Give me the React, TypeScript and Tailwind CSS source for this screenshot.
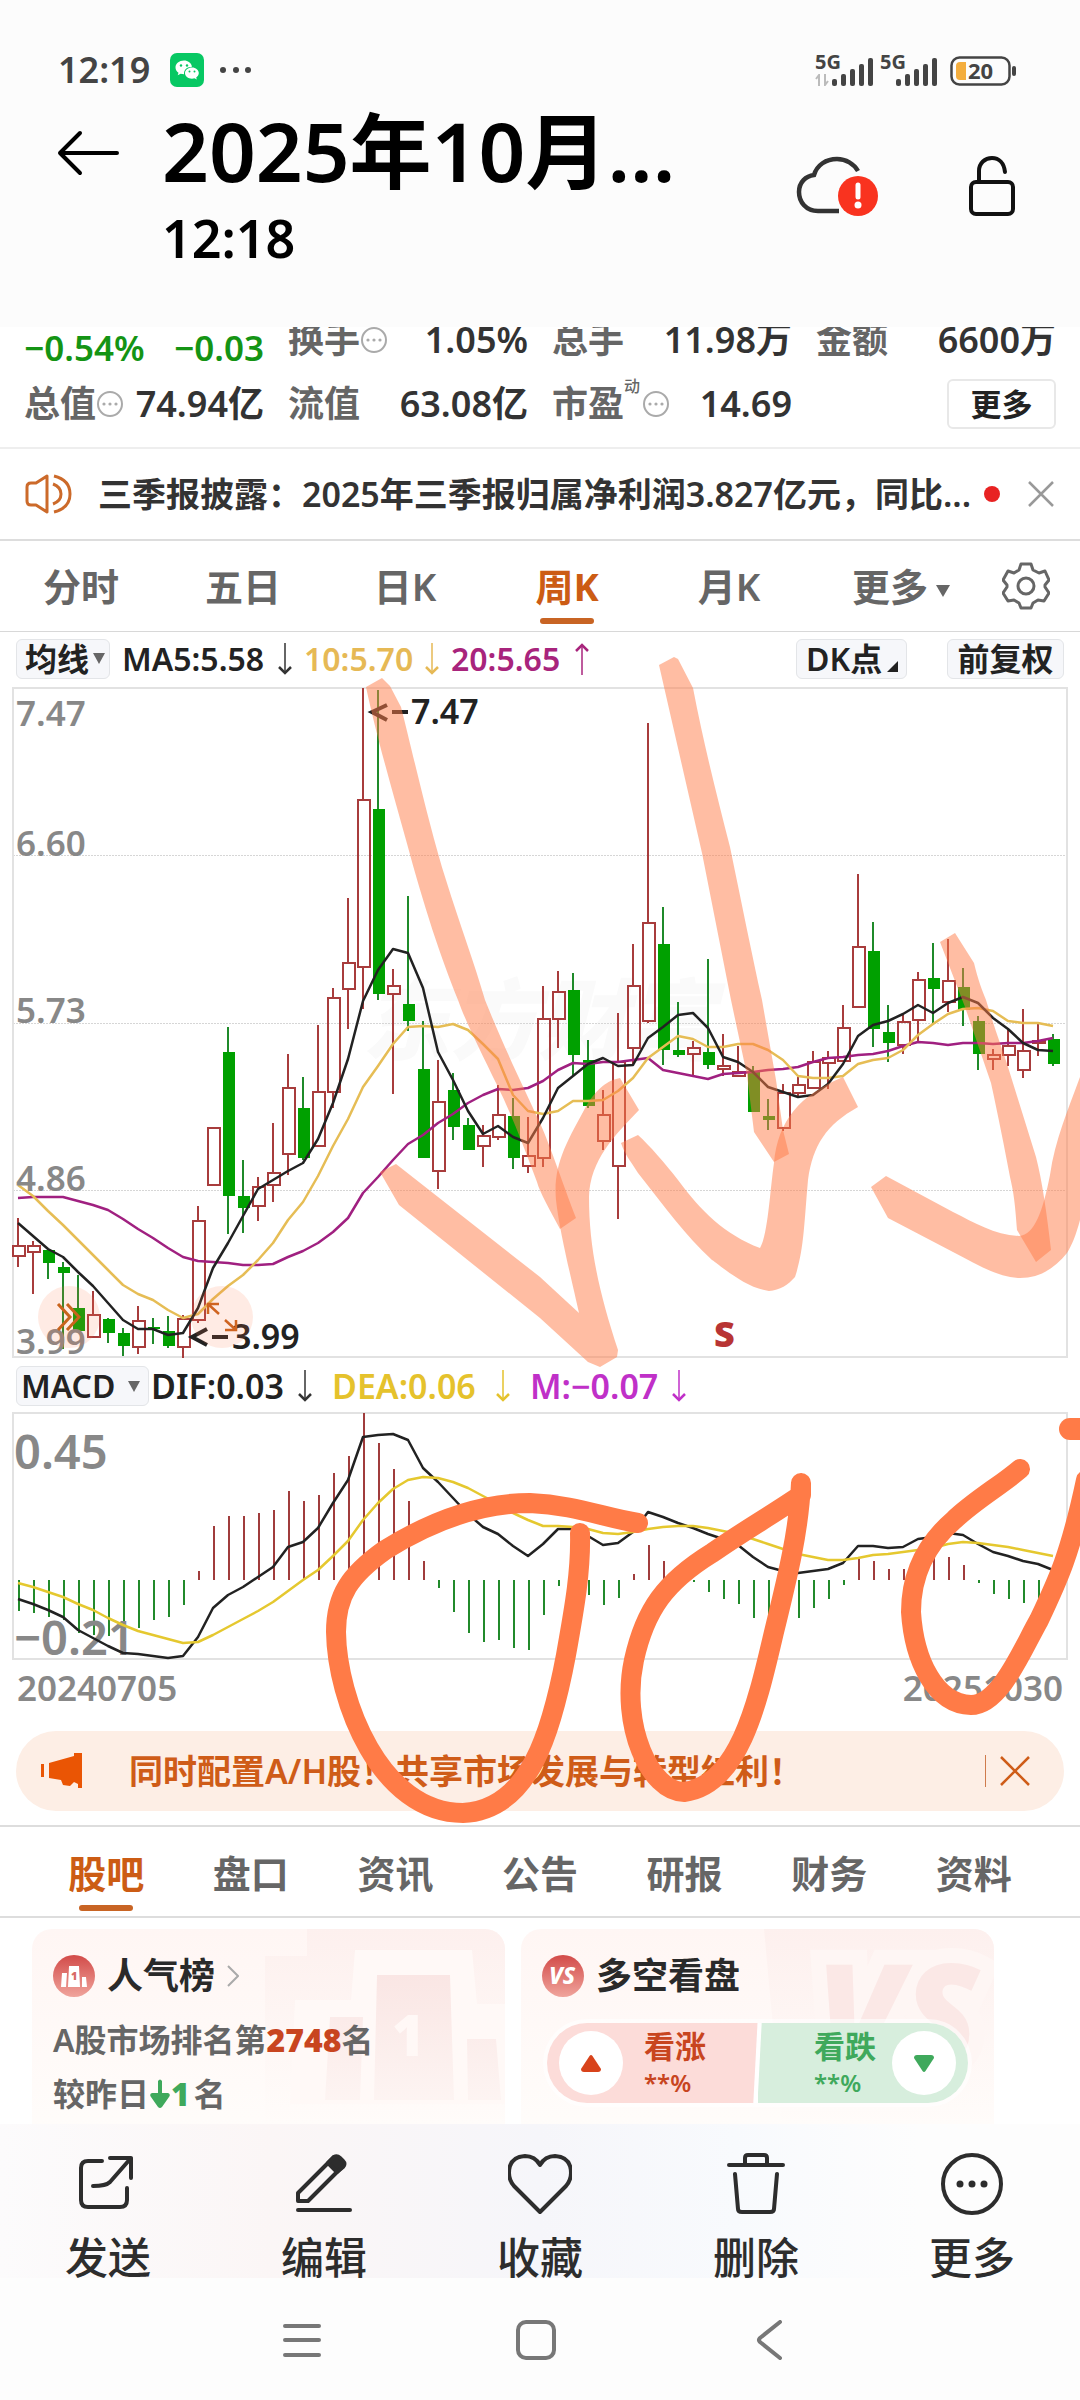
import React from "react";

const UP = "#a83c3c";
const DOWN = "#00a000";

/* [direction, high, body top, body bottom, low] in chart units */
const candles: [0 | 1, number, number, number, number][] = [
  [1, 1217, 1245, 1255, 1266], [1, 1240, 1245, 1251, 1293], [0, 1249, 1249, 1262, 1278], [0, 1261, 1266, 1272, 1348],
  [0, 1274, 1307, 1330, 1330], [1, 1290, 1314, 1336, 1337], [0, 1317, 1318, 1332, 1342], [0, 1327, 1332, 1345, 1355],
  [1, 1305, 1320, 1346, 1353], [0, 1317, 1326, 1328, 1343], [0, 1315, 1330, 1345, 1347], [1, 1314, 1318, 1346, 1357],
  [1, 1205, 1220, 1319, 1322], [1, 1127, 1127, 1184, 1184], [0, 1026, 1051, 1195, 1233], [0, 1159, 1195, 1207, 1232],
  [1, 1176, 1186, 1205, 1220], [1, 1122, 1172, 1184, 1201], [1, 1053, 1087, 1153, 1174], [0, 1076, 1107, 1157, 1159],
  [1, 1024, 1091, 1145, 1145], [1, 987, 997, 1091, 1107], [1, 897, 962, 988, 1028], [1, 687, 799, 966, 1008],
  [0, 689, 808, 993, 999], [1, 968, 985, 993, 1093], [0, 895, 1003, 1020, 1030], [0, 1020, 1068, 1157, 1157],
  [1, 1059, 1101, 1170, 1188], [0, 1072, 1089, 1126, 1139], [0, 1117, 1124, 1149, 1149], [1, 1124, 1135, 1145, 1166],
  [1, 1084, 1114, 1136, 1139], [0, 1097, 1115, 1157, 1168], [1, 1116, 1155, 1165, 1172], [1, 985, 1018, 1157, 1166],
  [1, 970, 991, 1018, 1047], [0, 972, 989, 1054, 1075], [0, 1039, 1059, 1105, 1107], [1, 1089, 1114, 1140, 1149],
  [1, 1012, 1061, 1165, 1218], [1, 943, 985, 1047, 1064], [1, 722, 922, 1020, 1022], [0, 906, 943, 1049, 1064],
  [0, 1001, 1049, 1054, 1056], [1, 1040, 1047, 1053, 1074], [0, 958, 1051, 1064, 1068], [1, 1033, 1065, 1068, 1075],
  [1, 1045, 1071, 1075, 1076], [0, 1065, 1071, 1111, 1111], [0, 1098, 1115, 1119, 1129], [1, 1083, 1092, 1127, 1130],
  [1, 1076, 1084, 1092, 1097], [1, 1050, 1061, 1087, 1088], [1, 1050, 1057, 1062, 1088], [1, 1004, 1027, 1060, 1061],
  [1, 873, 946, 1006, 1006], [0, 921, 950, 1028, 1046], [0, 1004, 1031, 1042, 1061], [1, 1013, 1021, 1044, 1053],
  [1, 971, 979, 1019, 1040], [0, 942, 977, 988, 1024], [1, 938, 980, 1001, 1011], [0, 967, 986, 1009, 1025],
  [0, 1015, 1020, 1053, 1069], [1, 1048, 1054, 1058, 1069], [1, 1029, 1045, 1054, 1065], [1, 1008, 1050, 1069, 1077],
  [1, 1023, 1040, 1042, 1055], [0, 1033, 1038, 1063, 1065],
];

const ma5 = [1222, 1235, 1248, 1256, 1271, 1285, 1302, 1319, 1328, 1328, 1334, 1332, 1307, 1267, 1242, 1215, 1188, 1179, 1170, 1162, 1138, 1102, 1058, 1000, 969, 948, 952, 987, 1051, 1079, 1110, 1133, 1125, 1136, 1142, 1117, 1087, 1075, 1063, 1057, 1065, 1064, 1037, 1026, 1014, 1012, 1027, 1056, 1061, 1071, 1086, 1091, 1096, 1094, 1083, 1063, 1035, 1024, 1020, 1013, 1004, 1012, 1002, 996, 1002, 1017, 1028, 1042, 1049, 1050];
const ma10 = [1184, 1195, 1210, 1224, 1239, 1254, 1269, 1284, 1293, 1299, 1309, 1317, 1313, 1298, 1285, 1274, 1259, 1242, 1219, 1201, 1175, 1145, 1118, 1086, 1065, 1043, 1026, 1025, 1026, 1023, 1029, 1043, 1058, 1094, 1110, 1113, 1110, 1100, 1100, 1099, 1090, 1077, 1057, 1046, 1035, 1038, 1046, 1046, 1043, 1043, 1049, 1059, 1075, 1077, 1077, 1075, 1063, 1059, 1057, 1049, 1034, 1023, 1013, 1008, 1007, 1010, 1020, 1022, 1022, 1025];
const ma20 = [1197, 1196, 1196, 1196, 1200, 1204, 1209, 1218, 1228, 1237, 1247, 1256, 1260, 1261, 1262, 1264, 1264, 1263, 1256, 1250, 1242, 1231, 1217, 1192, 1176, 1159, 1143, 1134, 1122, 1113, 1102, 1094, 1088, 1089, 1087, 1080, 1069, 1062, 1063, 1061, 1061, 1059, 1057, 1069, 1072, 1075, 1078, 1073, 1072, 1071, 1069, 1068, 1066, 1061, 1057, 1056, 1054, 1053, 1050, 1045, 1041, 1042, 1044, 1042, 1042, 1043, 1042, 1042, 1040, 1037];

const bars = [1610, 1612, 1616, 1619, 1632, 1634, 1635, 1632, 1627, 1619, 1616, 1604, 1570, 1525, 1515, 1515, 1512, 1509, 1490, 1500, 1494, 1472, 1455, 1412, 1442, 1468, 1500, 1560, 1587, 1611, 1632, 1641, 1639, 1647, 1649, 1614, 1585, 1585, 1594, 1604, 1597, 1573, 1544, 1560, 1572, 1581, 1591, 1598, 1603, 1617, 1625, 1622, 1617, 1607, 1598, 1584, 1556, 1560, 1568, 1568, 1562, 1556, 1556, 1564, 1582, 1593, 1598, 1602, 1602, 1602];
const dif = [1598, 1603, 1609, 1616, 1629, 1637, 1645, 1652, 1653, 1655, 1657, 1655, 1636, 1607, 1594, 1586, 1576, 1566, 1546, 1541, 1527, 1502, 1479, 1436, 1434, 1433, 1439, 1467, 1481, 1497, 1513, 1526, 1533, 1545, 1555, 1543, 1528, 1528, 1535, 1544, 1542, 1531, 1511, 1516, 1522, 1527, 1533, 1538, 1544, 1556, 1566, 1570, 1572, 1570, 1568, 1562, 1545, 1545, 1547, 1546, 1538, 1536, 1532, 1534, 1543, 1551, 1555, 1560, 1563, 1569];
const dea = [1582, 1586, 1591, 1596, 1603, 1609, 1617, 1624, 1630, 1634, 1638, 1642, 1641, 1634, 1626, 1618, 1610, 1601, 1590, 1579, 1569, 1555, 1540, 1519, 1502, 1488, 1479, 1476, 1477, 1481, 1487, 1495, 1503, 1512, 1519, 1525, 1525, 1526, 1528, 1532, 1533, 1531, 1528, 1526, 1525, 1525, 1527, 1530, 1533, 1538, 1543, 1548, 1553, 1556, 1559, 1559, 1557, 1554, 1553, 1551, 1549, 1547, 1543, 1541, 1542, 1544, 1546, 1549, 1552, 1555];

const line = (ys: number[]) => ys.map((y, i) => `${18 + i * 15},${y}`).join(" ");

function PriceChart() {
  return (
    <svg viewBox="0 680 1080 682" className="block h-auto w-full" fontWeight={600}>
      <text x="362" y="1052" fontSize="88" fontStyle="italic" fontWeight={900} fill="#fafafa">东方财富</text>
      <g stroke="#d6d6d6" strokeWidth="1" strokeDasharray="2 1">
        <path d="M13 854.5H1067M13 1022.5H1067M13 1189.5H1067" />
      </g>
      <rect x="13" y="687" width="1054" height="669" fill="none" stroke="#e2e2e2" strokeWidth="2" />
      {candles.map(([up, h, t, b, l], i) => {
        const x = 18 + i * 15;
        return up ? (
          <g key={i} stroke={UP} strokeWidth="2" fill="none">
            <path d={`M${x} ${h}V${t}M${x} ${b}V${l}`} />
            <rect x={x - 5} y={t} width="12" height={Math.max(b - t, 1)} />
          </g>
        ) : (
          <g key={i}>
            <path d={`M${x} ${h}V${l}`} stroke="#1f8a2a" strokeWidth="2" />
            <rect x={x - 5} y={t} width="12" height={b - t} fill={DOWN} />
          </g>
        );
      })}
      <g fill="none" strokeWidth="2.500" strokeLinejoin="round">
        <polyline points={line(ma20)} stroke="#a02080" />
        <polyline points={line(ma10)} stroke="#e6bd55" />
        <polyline points={line(ma5)} stroke="#222" />
      </g>
      <g fill="#888" fontSize="35">
        <text x="16" y="725">7.47</text>
        <text x="16" y="855">6.60</text>
        <text x="16" y="1022">5.73</text>
        <text x="16" y="1190">4.86</text>
        <text x="16" y="1353">3.99</text>
      </g>
      <g fill="none" stroke="#222" strokeWidth="4">
        <path d="M387 704L372 711L387 719M392 711H408M207 1328L192 1336L207 1344M212 1336H228" />
      </g>
      <g fill="#222" fontSize="34">
        <text x="411" y="723">7.47</text>
        <text x="232" y="1348">3.99</text>
      </g>
      <text x="714" y="1346" fontSize="36" fontWeight={900} fill="#b83434">S</text>
    </svg>
  );
}

function MacdChart() {
  return (
    <svg viewBox="0 1408 1080 254" className="block h-auto w-full" fontWeight={600}>
      <rect x="13" y="1412" width="1054" height="246" fill="none" stroke="#e2e2e2" strokeWidth="2" />
      {bars.map((y, i) => (
        <path key={i} d={`M${19 + i * 15} 1579V${y}`} strokeWidth="2" stroke={y < 1579 ? "#a03c3c" : "#218a2b"} />
      ))}
      <g fill="#888" fontSize="47">
        <text x="14" y="1468">0.45</text>
        <text x="14" y="1654">−0.21</text>
      </g>
      <g fill="none" strokeWidth="2.500" strokeLinejoin="round">
        <polyline points={line(dif)} stroke="#222" />
        <polyline points={line(dea)} stroke="#e5c82f" />
      </g>
    </svg>
  );
}

function Ink() {
  return (
    <svg viewBox="0 632 1080 1200" className="pointer-events-none absolute left-0 top-0 z-10 block h-auto w-full" aria-hidden="true">
      <g fill="#ff7b47" fillOpacity="0.5">
        <path d="M366 687L382 678L390 686L401 707C412 750 430 830 446 880C460 925 475 965 485 1000C505 1050 525 1090 540 1123C550 1145 565 1190 576 1218L560 1229C550 1210 540 1193 537 1182C525 1150 512 1115 497 1085C480 1050 465 1020 458 1000C440 955 425 910 406 840C392 790 375 730 366 687Z" />
        <path d="M380 1172L396 1164L540 1277L579 1313C573 1285 560 1235 556 1200C553 1165 566 1143 588 1103C600 1085 610 1080 620 1078L639 1110C615 1135 590 1160 589 1197C589 1250 600 1295 618 1350L617 1357L600 1367L588 1362L540 1318L399 1205Z" />
        <path d="M659 665L674 657L678 659L693 688C705 750 718 800 730 847C742 905 752 955 762 1000L776 1080L783 1130L789 1154L774 1162L754 1132L747 1075L731 1000L702 853Z" />
        <path d="M621 1143L638 1135C650 1146 664 1162 678 1180C700 1210 725 1235 760 1248C768 1235 770 1190 774 1163C778 1120 800 1095 843 1077L858 1107C826 1125 813 1145 808 1180C804 1225 804 1250 795 1277C788 1285 780 1290 769 1291C745 1288 720 1265 712 1260C685 1235 665 1207 638 1173C630 1160 625 1155 621 1143Z" />
        <path d="M940 942L955 933L974 963C978 980 982 990 986 1000C995 1030 1002 1048 1008 1067L1036 1157C1042 1180 1047 1215 1051 1250L1036 1262L1017 1230C1015 1200 1013 1190 1010 1177C1005 1150 998 1115 991 1083L965 1007Z" />
        <path d="M871 1187L886 1176L953 1212C975 1223 995 1235 1019 1236C1035 1235 1043 1210 1050 1175C1055 1140 1068 1110 1080 1077V1220C1076 1235 1072 1245 1067 1253C1055 1268 1040 1278 1020 1278C995 1277 975 1263 953 1252L888 1218Z" />
      </g>
      <g fill="none" stroke="#ff7b47" strokeWidth="20" strokeLinecap="round" strokeLinejoin="round">
        <path d="M638 1523C605 1518 575 1505 530 1503C475 1503 425 1525 385 1550C350 1575 336 1595 336 1632C337 1700 380 1813 463 1813C530 1810 552 1730 566 1655C575 1605 581 1570 580 1533" />
        <path d="M801 1483V1495C775 1513 745 1530 712 1553C665 1582 645 1610 634 1660C620 1725 650 1792 684 1792C740 1785 758 1700 774 1632C788 1575 799 1530 801 1483" />
        <path d="M1020 1469C1000 1486 975 1500 954 1520C925 1545 911 1575 911 1612C914 1660 935 1704 971 1705C1000 1705 1022 1650 1039 1620C1058 1580 1070 1555 1086 1480" />
        <path d="M1070 1429H1096" strokeWidth="22" />
      </g>
    </svg>
  );
}

function MoreDots() {
  return (
    <svg viewBox="0 0 28 28" className="h-7 w-7 shrink-0" fill="none" stroke="#aaa" strokeWidth="2">
      <circle cx="14" cy="14" r="12" />
      <g fill="#aaa" stroke="none"><circle cx="8" cy="14" r="1.6" /><circle cx="14" cy="14" r="1.6" /><circle cx="20" cy="14" r="1.6" /></g>
    </svg>
  );
}

function Signal() {
  return (
    <svg viewBox="0 0 42 28" className="h-7 w-[42px]" fill="#444">
      <rect x="0" y="21" width="5" height="7" rx="2" /><rect x="9" y="16" width="5" height="12" rx="2" /><rect x="18" y="11" width="5" height="17" rx="2" /><rect x="27" y="6" width="5" height="22" rx="2" /><rect x="36" y="0" width="5" height="28" rx="2" />
    </svg>
  );
}

function Arrow({ color, up = false }: { color: string; up?: boolean }) {
  return (
    <svg viewBox="0 0 14 34" className="h-[34px] w-[14px] shrink-0" fill="none" stroke={color}>
      {up ? <><path d="M7 3V33" strokeWidth="1.5" /><path d="M1 9L7 3L13 9" strokeWidth="2.5" /></> : <><path d="M7 1V30" strokeWidth="1.5" /><path d="M1 25L7 31L13 25" strokeWidth="2.5" /></>}
    </svg>
  );
}

const chip = "flex h-10 shrink-0 items-center rounded-md border border-[#e3e5e8] bg-[#f6f7fa] text-[32px] font-semibold leading-[38px] text-[#222]";

function Header() {
  return (
    <header className="bg-[#fcfcfc] pb-[59px] pt-12 text-black">
      <div className="flex h-11 items-center pl-[58px] pr-[64px] text-[#444]">
        <span className="text-[36px] font-semibold leading-[44px]">12:19</span>
        <svg viewBox="0 0 34 34" className="ml-5 h-[34px] w-[34px]">
          <rect width="34" height="34" rx="7" fill="#07c863" />
          <path d="M14 7.500c-4.800 0-8.500 3-8.500 6.900 0 2.200 1.200 4 3 5.300l-.8 2.500 2.900-1.500c1.100.3 2.200.5 3.400.5v-1c0-3.700 3.500-6.500 8-6.500C21.200 9.800 18 7.500 14 7.500z" fill="#fff" />
          <path d="M22 14.500c-4 0-7 2.500-7 5.600s3 5.600 7 5.600c.9 0 1.700-.1 2.500-.4l2.300 1.200-.6-2c1.600-1 2.600-2.600 2.600-4.400 0-3.100-3-5.600-6.800-5.600z" fill="#fff" />
          <g fill="#07c863"><circle cx="11" cy="12.500" r="1.200" /><circle cx="17" cy="12.500" r="1.200" /><circle cx="19.500" cy="18.500" r="1" /><circle cx="24.500" cy="18.500" r="1" /></g>
        </svg>
        <svg viewBox="0 0 32 8" className="ml-4 h-2 w-8" fill="#444"><circle cx="3" cy="4" r="3" /><circle cx="16" cy="4" r="3" /><circle cx="28" cy="4" r="3" /></svg>
        <div className="ml-auto flex h-8 items-end">
          <div className="relative pl-[17px]">
            <span className="absolute left-0 top-[-6px] text-[20px] font-bold leading-5">5G</span>
            <svg viewBox="0 0 14 12" className="absolute bottom-0 left-0 h-3 w-[14px]" fill="none" stroke="#bbb" strokeWidth="2"><path d="M4 12V1L1 5M10 0V11L13 7" /></svg>
            <Signal />
          </div>
          <div className="relative ml-[6px] pl-[16px]">
            <span className="absolute left-0 top-[-6px] text-[20px] font-bold leading-5">5G</span>
            <Signal />
          </div>
          <svg viewBox="0 0 66 30" className="ml-3 h-[30px] w-[66px]">
            <rect x="1.500" y="1.500" width="58" height="27" rx="8" fill="none" stroke="#444" strokeWidth="2.500" />
            <path d="M6 10a4 4 0 0 1 4-4h6v18h-6a4 4 0 0 1-4-4z" fill="#f4ad3c" />
            <rect x="62" y="10" width="4" height="10" rx="2" fill="#444" />
            <text x="18" y="23" fontSize="22" fontWeight={700} fill="#444">20</text>
          </svg>
        </div>
      </div>
      <div className="flex items-start pl-[56px] pr-[62px] pt-[14px]">
        <button aria-label="返回" className="mt-6">
          <svg viewBox="0 0 64 46" className="h-[46px] w-[64px]" fill="none" stroke="#000" strokeWidth="4" strokeLinecap="round" strokeLinejoin="round"><path d="M61 23H4M24 3L4 23L24 43" /></svg>
        </button>
        <div className="ml-[42px] min-w-0 flex-1">
          <h1 className="whitespace-nowrap text-[82px] font-semibold leading-[88px]">2025年10月...</h1>
          <p className="mt-[14px] text-[52px] font-semibold leading-[60px]">12:18</p>
        </div>
        <button aria-label="云同步" className="mt-12">
          <svg viewBox="0 0 84 64" className="h-16 w-[84px]">
            <path d="M43 57H22C10 57 3 48 3 38C3 28 10 22 18 21C21 11 30 5 41 5C50 5 58 10 62 17" fill="none" stroke="#333" strokeWidth="4.500" />
            <circle cx="62" cy="42" r="20" fill="#f9331f" />
            <path d="M62 31V43" stroke="#fff" strokeWidth="5" strokeLinecap="round" /><circle cx="62" cy="51" r="3.500" fill="#fff" />
          </svg>
        </button>
        <button aria-label="锁定" className="ml-[86px] mt-12">
          <svg viewBox="0 0 52 64" className="h-16 w-[52px]" fill="none" stroke="#111" strokeWidth="4" strokeLinecap="round"><rect x="5" y="28" width="42" height="32" rx="5" /><path d="M13 28V17C13 9 19 4 26 4C33 4 38 9 39 18" /></svg>
        </button>
      </div>
    </header>
  );
}

function Cell({ label, value, dots = false, sup }: { label: string; value: string; dots?: boolean; sup?: string }) {
  return (
    <div className="flex items-center whitespace-nowrap">
      <span className="font-semibold text-[#666]">{label}</span>
      {sup && <sup className="mb-5 w-[18px] text-[16px] font-medium leading-4 text-[#666]">{sup}</sup>}
      {dots && <MoreDots />}
      <span className="ml-auto text-[36px] font-semibold text-[#333]">{value}</span>
    </div>
  );
}

function Quote() {
  return (
    <section className="overflow-hidden border-b-2 border-[#eee] pb-[6px]">
      <div className="-mt-[14px] grid grid-cols-4 gap-x-6 px-6 text-[36px] leading-[54px]">
        <div className="flex items-end justify-between whitespace-nowrap pt-4 text-[35px] font-semibold leading-[38px] text-[#149414]"><span>−0.54%</span><span>−0.03</span></div>
        <Cell label="换手" value="1.05%" dots />
        <Cell label="总手" value="11.98万" />
        <Cell label="金额" value="6600万" />
        <div className="col-span-4 grid h-[74px] grid-cols-4 gap-x-6">
          <Cell label="总值" value="74.94亿" dots />
          <Cell label="流值" value="63.08亿" />
          <Cell label="市盈" value="14.69" dots sup="动" />
          <div className="flex items-center justify-end"><button className="h-[50px] w-[109px] rounded-md border-2 border-[#e8e8e8] text-[31px] font-semibold leading-[44px] text-[#222]">更多</button></div>
        </div>
      </div>
    </section>
  );
}

function News() {
  return (
    <section className="flex h-[92px] items-center border-b-2 border-[#ddd] pl-[25px] pr-[26px]">
      <svg viewBox="0 0 48 42" className="h-[42px] w-12 shrink-0" fill="none" stroke="#cc6a2a" strokeWidth="3" strokeLinejoin="round"><path d="M22 3L11 10H6Q2 10 2 14V28Q2 32 6 32H11L22 39ZM28 11Q36 14 36 21T28 31M29 3Q45 7 45 21T29 39" /></svg>
      <p className="ml-[25px] min-w-0 flex-1 whitespace-nowrap text-[34px] font-semibold leading-[50px] text-[#333]">三季报披露：2025年三季报归属净利润3.827亿元，同比...</p>
      <span className="h-4 w-4 rounded-full bg-[#e82222]" />
      <button aria-label="关闭" className="ml-7"><svg viewBox="0 0 26 26" className="h-[26px] w-[26px]" stroke="#999" strokeWidth="2.500"><path d="M1 1L25 25M25 1L1 25" /></svg></button>
    </section>
  );
}

function PeriodTabs() {
  return (
    <nav className="flex h-[91px] border-b border-[#d8d8d8] text-[38px] font-semibold leading-[88px] text-[#666]">
      {["分时", "五日", "日K", "周K", "月K", "更多"].map((t) => (
        <button key={t} className={`relative w-[15%] whitespace-nowrap ${t === "周K" ? "font-bold text-[#cc5c14]" : ""} ${t === "更多" ? "pl-5" : ""}`}>
          {t}
          {t === "更多" && <svg viewBox="0 0 14 12" className="ml-2 inline-block h-3 w-[14px]" fill="#666"><path d="M0 0H14L7 12Z" /></svg>}
          {t === "周K" && <span className="absolute bottom-[7px] left-1/2 h-[6px] w-[54px] -translate-x-1/2 rounded-full bg-[#c86424]" />}
        </button>
      ))}
      <button aria-label="设置" className="flex w-[10%] items-center justify-center">
        <svg viewBox="0 0 48 48" className="h-12 w-12" fill="none" stroke="#666" strokeWidth="3" strokeLinejoin="round"><path d="M19 2H29L31 8L37 11L43 9L47 18L43 23V25L47 31L42 39L36 38L31 41L29 46H19L17 41L12 38L6 39L1 31L5 25V23L1 18L6 9L12 11L17 8Z" /><circle cx="24" cy="24" r="8" /></svg>
      </button>
    </nav>
  );
}

function Charts() {
  return (
    <section className="relative">
      <Ink />
      <div className="flex h-[49px] items-center whitespace-nowrap px-4 pt-1 text-[32px] font-semibold leading-[40px]">
        <button className={`${chip} w-[94px] pl-2`}>均线<svg viewBox="0 0 12 11" className="ml-1 h-[11px] w-3" fill="#666"><path d="M0 0H12L6 11Z" /></svg></button>
        <div className="ml-3 flex flex-1 items-center">
          <span className="w-[156px] text-[#222]">MA5:5.58</span><Arrow color="#333" />
          <span className="ml-3 w-[121px] text-[#e6b955]">10:5.70</span><Arrow color="#e6b955" />
          <span className="ml-3 w-[124px] text-[#a8247c]">20:5.65</span><Arrow color="#a8247c" up />
        </div>
        <button className={`${chip} w-[111px] pl-[9px]`}>DK点<svg viewBox="0 0 11 11" className="ml-[5px] mt-4 h-[11px] w-[11px]" fill="#222"><path d="M11 0V11H0Z" /></svg></button>
        <button className={`${chip} ml-10 w-[117px] justify-center`}>前复权</button>
      </div>
      <div className="relative">
        <PriceChart />
        <button aria-label="展开" className="absolute bottom-[15px] left-[38px] flex h-[62px] w-[62px] items-center justify-center rounded-full bg-[#ff7b47]/15">
          <svg viewBox="0 0 26 28" className="h-7 w-[26px]" fill="none" stroke="#c9641c" strokeWidth="3"><path d="M2 1L14 14L2 27M11 1L23 14L11 27" /></svg>
        </button>
        <button aria-label="全屏" className="absolute bottom-[15px] left-[191px] flex h-[62px] w-[62px] items-center justify-center rounded-full bg-[#ff7b47]/15">
          <svg viewBox="0 0 32 32" className="h-8 w-8" fill="none" stroke="#cf6420" strokeWidth="2.500"><path d="M2 13V3H13M2 3L13 13M30 19V29H19M30 29L19 19" /></svg>
        </button>
      </div>
      <div className="flex h-[46px] items-center whitespace-nowrap pl-4 text-[34px] font-semibold leading-[40px]">
        <button className={`${chip} w-[133px] pl-1`}>MACD<svg viewBox="0 0 12 11" className="ml-auto mr-2 h-[11px] w-3" fill="#666"><path d="M0 0H12L6 11Z" /></svg></button>
        <span className="ml-[2px] w-[147px] text-[#222]">DIF:0.03</span><Arrow color="#333" />
        <span className="ml-5 w-[164px] text-[#e5c22c]">DEA:0.06</span><Arrow color="#e5c22c" />
        <span className="ml-5 w-[142px] text-[#c030c8]">M:−0.07</span><Arrow color="#c030c8" />
      </div>
      <MacdChart />
      <div className="flex h-[68px] justify-between px-[17px] pt-[2px] text-[35px] font-semibold leading-[46px] text-[#888]"><span>20240705</span><span>20251030</span></div>
      <div className="border-b-2 border-[#ddd] px-4 pb-[14px]">
        <div className="flex h-20 items-center rounded-full bg-[#fdeee5] pl-[25px] pr-[34px]">
          <svg viewBox="0 0 42 36" className="h-9 w-[42px] shrink-0" fill="#ea5504"><rect x="0" y="11" width="3" height="13" /><path d="M8 10L33 3V0H41V35H37V31L33 29L29 33L22 32L20 27L8 25Z" /></svg>
          <p className="ml-[46px] flex-1 whitespace-nowrap text-[34px] font-semibold leading-[50px] text-[#cf5c18]">同时配置A/H股！共享市场发展与转型红利！</p>
          <span className="h-8 w-px bg-[#cf7b4c]" />
          <button aria-label="关闭横幅" className="ml-[14px]"><svg viewBox="0 0 30 30" className="h-[30px] w-[30px]" stroke="#cf5c18" strokeWidth="2.500"><path d="M1 1L29 29M29 1L1 29" /></svg></button>
        </div>
      </div>
    </section>
  );
}

function InfoTabs() {
  return (
    <nav className="flex h-[91px] border-b-2 border-[#ddd] px-[34px] text-[38px] font-semibold leading-[92px] text-[#666]">
      {["股吧", "盘口", "资讯", "公告", "研报", "财务", "资料"].map((t) => (
        <button key={t} className={`relative flex-1 ${t === "股吧" ? "font-bold text-[#cc5c14]" : ""}`}>
          {t}
          {t === "股吧" && <span className="absolute bottom-[5px] left-1/2 h-[6px] w-[54px] -translate-x-1/2 rounded-full bg-[#c86424]" />}
        </button>
      ))}
    </nav>
  );
}

function Cards() {
  return (
    <section className="flex h-[206px] gap-4 overflow-hidden pl-8 pr-[86px] pt-[11px]">
      <div className="relative h-[220px] flex-1 overflow-hidden rounded-[20px] bg-gradient-to-b from-[#fff6f4] to-[#fffdfb] pl-[21px]">
        <svg viewBox="0 0 240 195" className="absolute right-0 top-0 h-[195px] w-[240px]">
          <defs>
            <linearGradient id="podium" x2="0" y2="1"><stop stopColor="#fae6e4" /><stop offset="1" stopColor="#fdf4f2" /></linearGradient>
            <linearGradient id="haze" x2="0" y2="1"><stop stopColor="#fdf0ee" /><stop offset="1" stopColor="#fffcfa" /></linearGradient>
          </defs>
          <path d="M42 0H240V195H0V27H42Z" fill="url(#haze)" />
          <path d="M90 21H207L212 75H240V175H25L30 71H86Z" fill="#fff9f7" />
          <path d="M112 46H185L189 171H109ZM65 88H98L95 171H60ZM202 110H231L236 171H203Z" fill="url(#podium)" />
          <text x="127" y="127" fontSize="56" fontWeight={900} fill="#fff8f6">1</text>
        </svg>
        <div className="relative flex h-[94px] items-center">
          <svg viewBox="0 0 42 42" className="h-[42px] w-[42px]"><defs><linearGradient id="badge" x2="0" y2="1"><stop stopColor="#d24b49" /><stop offset="1" stopColor="#f0a49c" /></linearGradient></defs><circle cx="21" cy="21" r="21" fill="url(#badge)" /><path d="M9 18H14L13 32H8ZM16 11H26L27 32H15ZM29 22H33L34 32H29Z" fill="#fff" /><text x="18" y="25" fontSize="11" fontWeight={900} fill="#d86a66">1</text></svg>
          <h2 className="ml-3 text-[36px] font-bold leading-[50px] text-[#2a2a2a]">人气榜</h2>
          <svg viewBox="0 0 12 22" className="ml-3 h-[22px] w-3" fill="none" stroke="#aaa" strokeWidth="2"><path d="M1 1L11 11L1 21" /></svg>
        </div>
        <p className="relative mt-[-10px] whitespace-nowrap text-[32px] font-semibold leading-[54px] text-[#666]">A股市场排名第<b className="text-[#c8451f]">2748</b>名</p>
        <p className="relative flex items-center whitespace-nowrap text-[32px] font-semibold leading-[54px] text-[#666]">较昨日<svg viewBox="0 0 20 30" className="mx-px h-[30px] w-5" fill="#3fa95c"><path d="M8 2Q10-1 12 2V14H18Q21 15 19 18L12 28Q10 30 8 28L1 18Q-1 15 2 14H8Z" /></svg><b className="text-[#3fa95c]">1</b><span className="ml-1">名</span></p>
      </div>
      <div className="relative h-[220px] flex-1 overflow-hidden rounded-[20px] bg-gradient-to-b from-[#fff6f4] to-[#fffdfb] pl-[21px]">
        <svg viewBox="0 0 230 195" className="absolute right-0 top-0 h-[195px] w-[230px]">
          <path d="M0 0H230V195H18Z" fill="url(#haze)" />
          <text x="52" y="136" fontSize="140" fontWeight={900} fontStyle="italic" fill="#fbe8e6" stroke="#fef6f4" strokeWidth="30" paintOrder="stroke">VS</text>
        </svg>
        <div className="relative flex h-[94px] items-center">
          <svg viewBox="0 0 42 42" className="h-[42px] w-[42px]"><circle cx="21" cy="21" r="21" fill="url(#badge)" /><text x="20" y="29" textAnchor="middle" fontSize="23" fontWeight={800} fontStyle="italic" fill="#fff">VS</text></svg>
          <h2 className="ml-3 text-[36px] font-bold leading-[50px] text-[#2a2a2a]">多空看盘</h2>
        </div>
        <div className="relative ml-[5px] mr-[26px] flex h-20 overflow-hidden rounded-full bg-white ring-4 ring-white/60">
          <button className="flex flex-1 items-center bg-[#fcdcd9] pl-3 text-left text-[#c8451f] [clip-path:polygon(0_0,100%_0,98%_100%,0_100%)]">
            <span className="flex h-16 w-16 items-center justify-center rounded-full bg-white"><svg viewBox="0 0 20 17" className="h-[17px] w-5" fill="#d8431b"><path d="M8.500 1Q10-1 11.500 1L20 14Q20 17 17 17H3Q0 17 0 14Z" /></svg></span>
            <span className="ml-[21px] text-[31px] font-semibold leading-10">看涨<span className="block text-[24px] leading-[34px]">**%</span></span>
          </button>
          <button className="flex flex-1 items-center justify-end bg-[#d7eedd] pr-3 text-left text-[#3fa95c] [clip-path:polygon(2%_0,100%_0,100%_100%,0_100%)]">
            <span className="mr-[16px] text-[31px] font-semibold leading-10">看跌<span className="block text-[24px] leading-[34px]">**%</span></span>
            <span className="flex h-16 w-16 items-center justify-center rounded-full bg-white"><svg viewBox="0 0 20 17" className="h-[17px] w-5" fill="#3fa95c"><path d="M8.500 16Q10 18 11.500 16L20 3Q20 0 17 0H3Q0 0 0 3Z" /></svg></span>
          </button>
        </div>
      </div>
    </section>
  );
}

const tools: [string, React.ReactNode][] = [
  ["发送", <><path d="M26 9H12Q5 9 5 16V48Q5 55 12 55H44Q51 55 51 48V36" /><path d="M34 6H55V26M55 6L34 30Q30 34 17 34" /></>],
  ["编辑", <><path d="M6 58H58" /><path d="M6 41L42 5L51 14L16 49H6Z" /><path d="M36 11L42 5Q45 3 48 6L51 9Q54 12 51 15L45 20Z" fill="#2d2d2d" /></>],
  ["收藏", <path d="M32 60L6 34Q1 28 1 21Q1 5 17 4Q27 4 32 13Q37 4 47 4Q63 5 63 21Q63 28 58 34Z" />],
  ["删除", <><path d="M5 13H59M21 13V6Q21 3 24 3H40Q43 3 43 6V13M11 22L14 57Q14 60 18 60H46Q50 60 50 57L53 22" /></>],
  ["更多", <><circle cx="32" cy="32" r="29" /><g fill="#2d2d2d" stroke="none"><circle cx="20" cy="32" r="3.500" /><circle cx="32" cy="32" r="3.500" /><circle cx="44" cy="32" r="3.500" /></g></>],
];

export default function App() {
  return (
    <div className="min-h-screen w-full overflow-hidden bg-white font-['Noto_Sans','Noto_Sans_CJK_SC',sans-serif]">
      <Header />
      <main>
        <Quote />
        <News />
        <PeriodTabs />
        <Charts />
        <InfoTabs />
        <Cards />
      </main>
      <footer>
        <div className="flex h-[154px] overflow-hidden bg-[linear-gradient(90deg,#fcfbfc_0%,#fbf6f6_25%,#f6f6fa_50%,#f8fafd_68%,#fdfdfd_85%)] pt-7 text-[#2d2d2d]">
          {tools.map(([label, icon]) => (
            <button key={label} className="flex flex-1 flex-col items-center">
              <svg viewBox="0 0 64 64" className="h-16 w-16 shrink-0" fill="none" stroke="#2d2d2d" strokeWidth="4" strokeLinecap="round" strokeLinejoin="round">{icon}</svg>
              <span className="mt-3 text-[43px] font-medium leading-[60px]">{label}</span>
            </button>
          ))}
        </div>
        <div className="flex h-[124px] items-center justify-between bg-[#fdfdfd] pl-[282px] pr-[290px]">
          <button aria-label="最近任务"><svg viewBox="0 0 40 40" className="h-10 w-10" stroke="#777" strokeWidth="4" strokeLinecap="round"><path d="M3 6H37M3 20H37M3 35H37" /></svg></button>
          <button aria-label="主屏幕"><svg viewBox="0 0 40 40" className="h-10 w-10" fill="none" stroke="#777" strokeWidth="4"><rect x="2" y="2" width="36" height="36" rx="8" /></svg></button>
          <button aria-label="返回上一页"><svg viewBox="0 0 40 40" className="h-10 w-10" fill="none" stroke="#777" strokeWidth="4" strokeLinecap="round" strokeLinejoin="round"><path d="M30 2L10 18Q8 20 10 22L30 38" /></svg></button>
        </div>
      </footer>
    </div>
  );
}
